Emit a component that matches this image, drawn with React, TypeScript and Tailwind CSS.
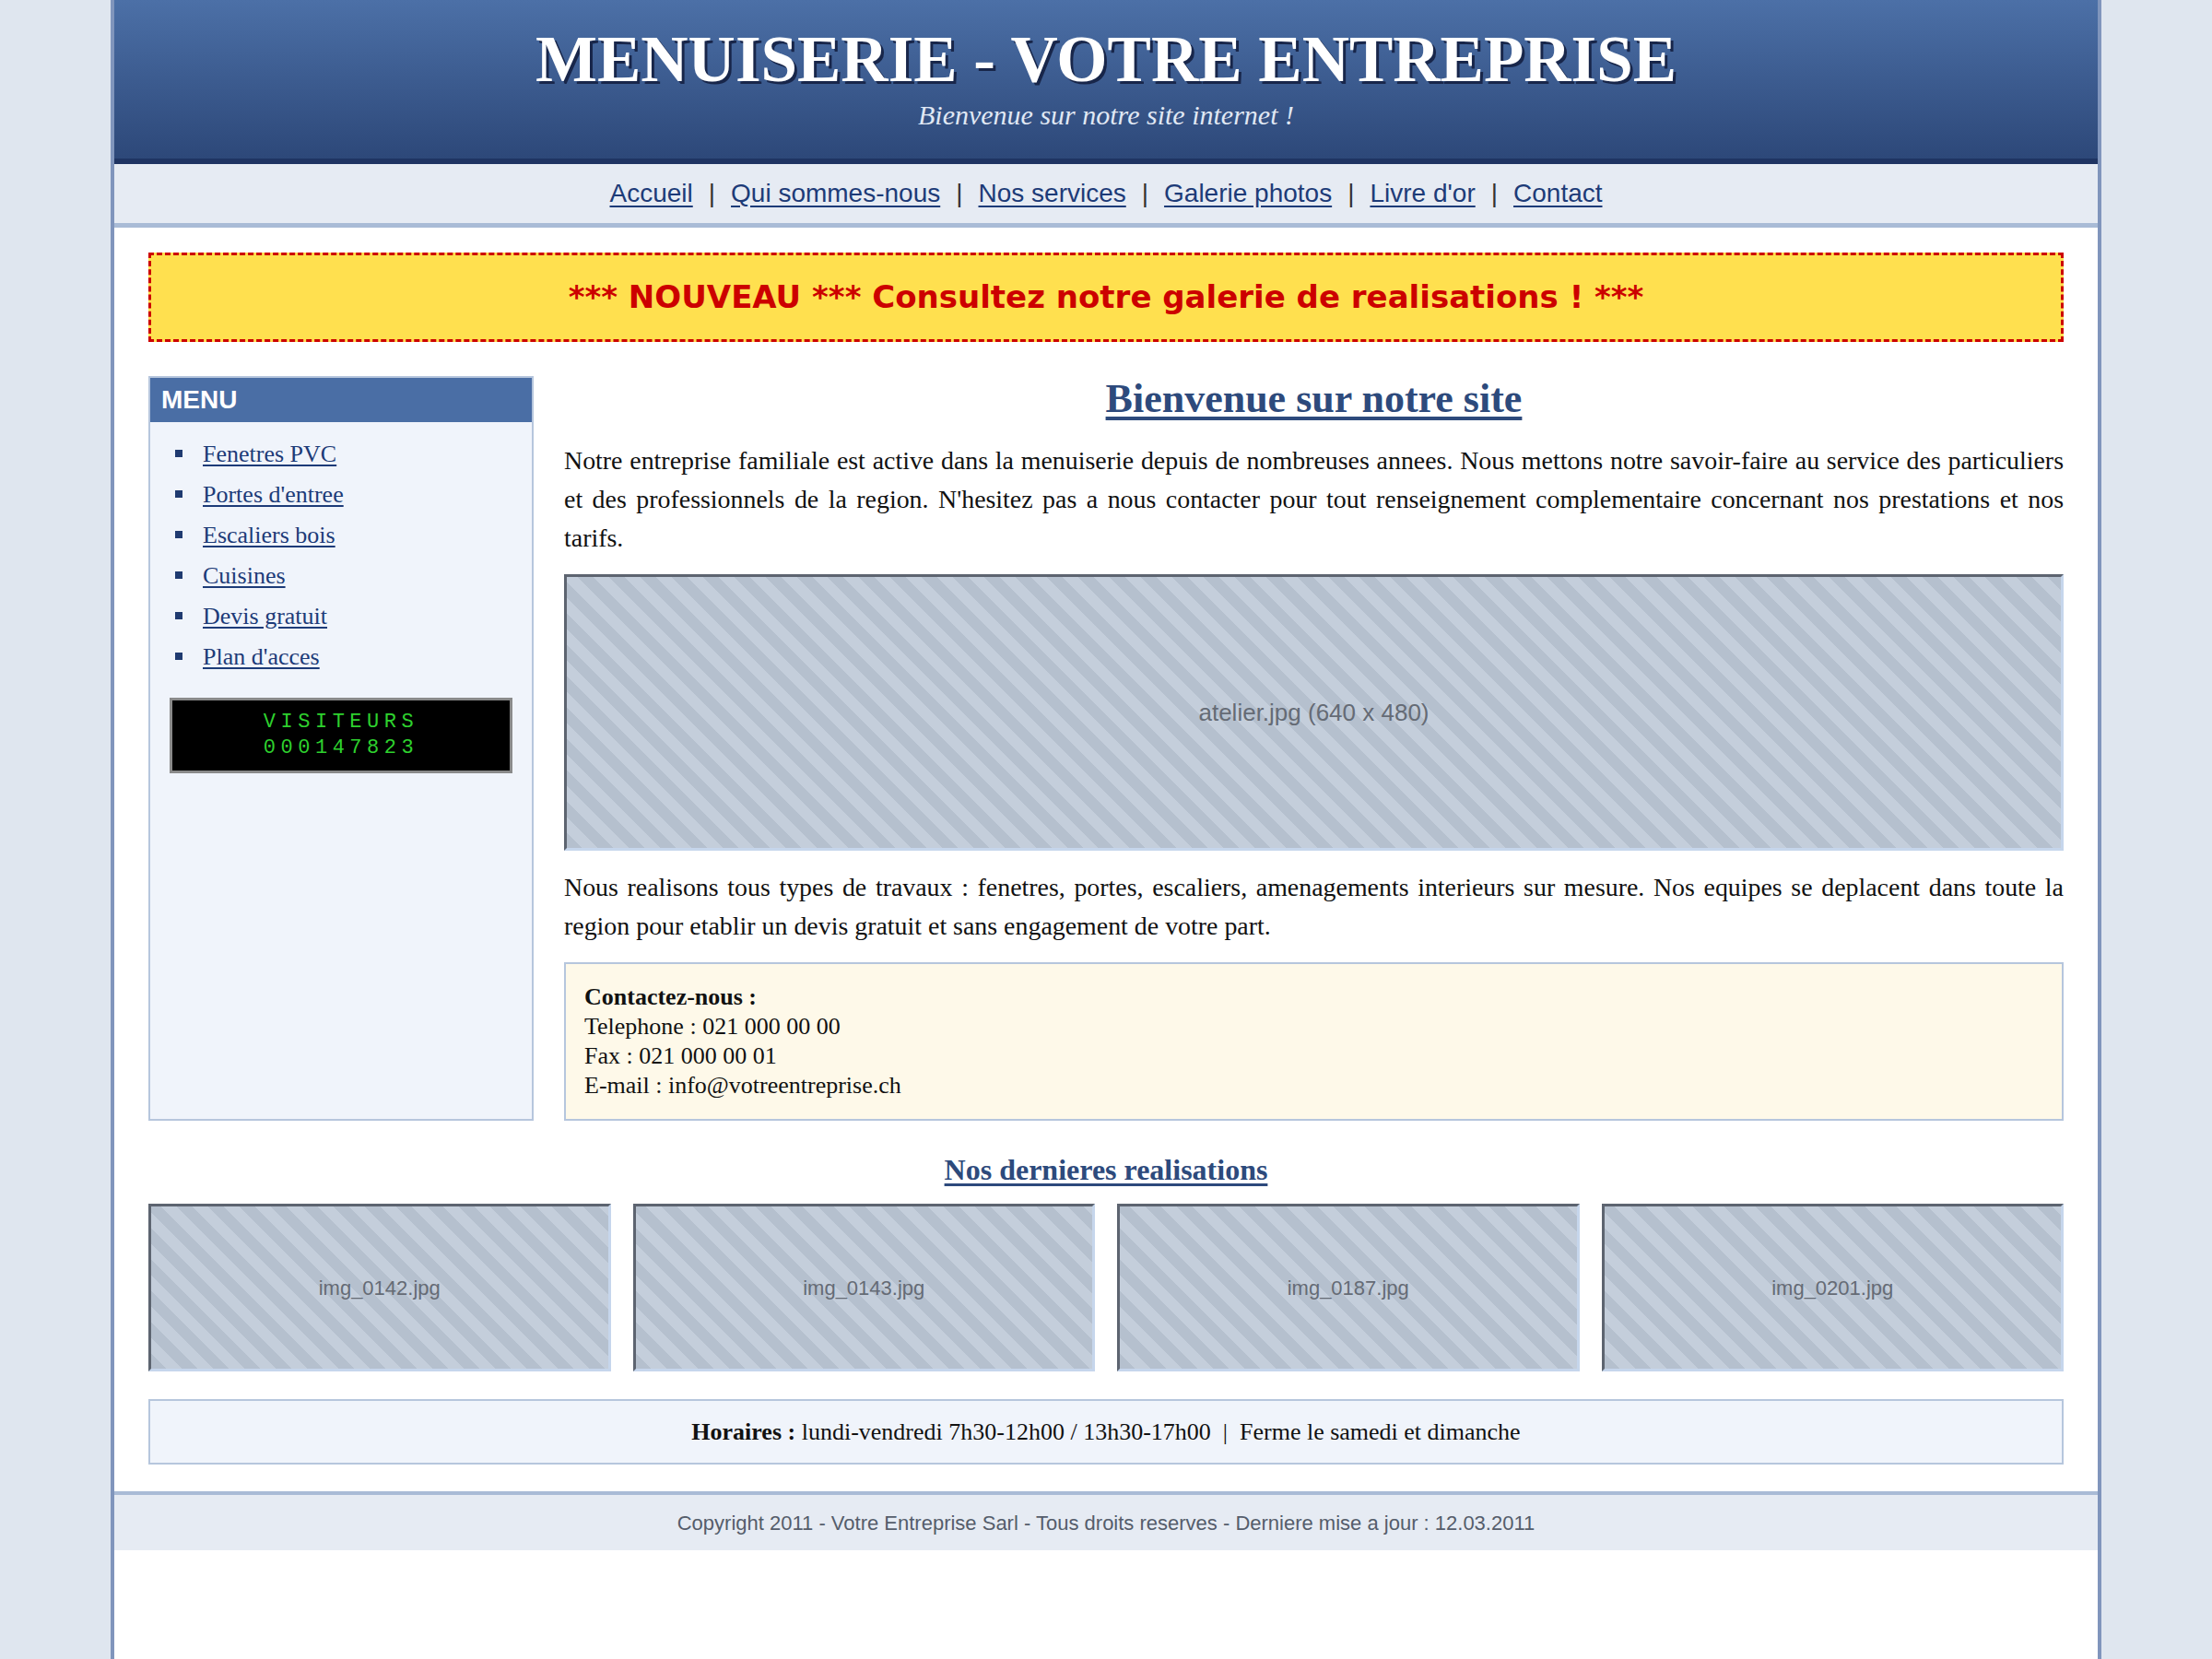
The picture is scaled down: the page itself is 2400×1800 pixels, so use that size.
const navLinks = ['Accueil', 'Qui sommes-nous', 'Nos services', 'Galerie photos', "Livre d'or", 'Contact'];
const menuItems = ['Fenetres PVC', "Portes d'entree", 'Escaliers bois', 'Cuisines', 'Devis gratuit', "Plan d'acces"];
const thumbs = ['img_0142.jpg', 'img_0143.jpg', 'img_0187.jpg', 'img_0201.jpg'];

function Placeholder({ label, className, textClass }: { label: string; className: string; textClass: string }) {
  return (
    <div
      className={`flex items-center justify-center border-[3px] border-t-[#5d6470] border-l-[#5d6470] border-r-[#c6d6ec] border-b-[#c6d6ec] bg-[repeating-linear-gradient(45deg,#b5c0ce_0px,#b5c0ce_12px,#c4cedb_12px,#c4cedb_24px)] font-['Liberation_Sans',sans-serif] text-[#656b75] ${className}`}
    >
      <span className={textClass}>{label}</span>
    </div>
  );
}

export default function App() {
  return (
    <div className="min-h-screen bg-[#dfe6ef] font-['Liberation_Serif',serif] text-[#111]">
      <div className="mx-auto min-h-screen w-[2160px] border-x-4 border-[#8095bc] bg-white">
        {/* Header banner */}
        <header className="h-[178px] border-b-[6px] border-[#1f3462] bg-linear-to-b from-[#4c70a7] to-[#2d4879] pt-[22px] text-center">
          <h1 className="text-[71px] font-bold leading-[84px] text-white [text-shadow:3px_3px_0_#18264a]">
            MENUISERIE - VOTRE ENTREPRISE
          </h1>
          <p className="mt-[3px] text-[30px] italic leading-[32px] text-[#e0e8f4]">Bienvenue sur notre site internet !</p>
        </header>

        {/* Top navigation */}
        <nav className="flex h-[69px] items-center justify-center gap-[17px] border-b-[5px] border-[#a9bbd6] bg-[#e6ebf3] font-['Liberation_Sans',sans-serif] text-[28px]">
          {navLinks.map((l, i) => (
            <div key={l} className="flex items-center gap-[17px]">
              {i > 0 && <span className="text-[#333]">|</span>}
              <a href="#" className="text-[#1d3b78] underline underline-offset-[4px]">
                {l}
              </a>
            </div>
          ))}
        </nav>

        <main className="px-[37px] pt-[27px] pb-[29px]">
          {/* Announcement */}
          <div className="flex h-[97px] items-center justify-center border-[3px] border-dashed border-[#cc0000] bg-[#ffe04f] font-['Comic_Sans_MS','DejaVu_Sans',sans-serif] text-[34px] font-bold text-[#cc0000]">
            *** NOUVEAU *** Consultez notre galerie de realisations ! ***
          </div>

          <div className="mt-[37px] flex items-stretch gap-[33px]">
            {/* Sidebar */}
            <aside className="w-[418px] shrink-0 border-2 border-[#b6c6dd] bg-[#f0f4fb]">
              <div className="flex h-[48px] items-center bg-[#4a6ea5] pl-[12px] font-['Liberation_Sans',sans-serif] text-[28px] font-bold text-white">
                MENU
              </div>
              <ul className="pt-[12px]">
                {menuItems.map((m) => (
                  <li key={m} className="flex h-[44px] items-center">
                    <span className="ml-[27px] h-[8px] w-[8px] bg-[#1f3a70]" />
                    <a href="#" className="ml-[22px] text-[26px] text-[#1d3b78] underline underline-offset-[3px]">
                      {m}
                    </a>
                  </li>
                ))}
              </ul>
              <div className="mx-[21px] mt-[23px] flex h-[82px] flex-col items-center justify-center border-[3px] border-[#8a8a8a] bg-black font-['Liberation_Mono',monospace] text-[22px] leading-[28px] tracking-[5.5px] text-[#2ed12e]">
                <span>VISITEURS</span>
                <span>000147823</span>
              </div>
            </aside>

            {/* Main content */}
            <section className="flex min-w-0 flex-1 flex-col">
              <h2 className="text-center text-[44px] font-bold leading-[50px] text-[#2d4a7c] underline underline-offset-[5px]">
                Bienvenue sur notre site
              </h2>
              <p className="mt-[21px] text-justify text-[27.9px] leading-[42px]">
                Notre entreprise familiale est active dans la menuiserie depuis de nombreuses annees. Nous mettons notre
                savoir-faire au service des particuliers et des professionnels de la region. N'hesitez pas a nous
                contacter pour tout renseignement complementaire concernant nos prestations et nos tarifs.
              </p>
              <Placeholder label="atelier.jpg (640 x 480)" className="mt-[18px] h-[300px]" textClass="text-[26px]" />
              <p className="mt-[19px] text-justify text-[27.9px] leading-[42px]">
                Nous realisons tous types de travaux : fenetres, portes, escaliers, amenagements interieurs sur mesure.
                Nos equipes se deplacent dans toute la region pour etablir un devis gratuit et sans engagement de votre
                part.
              </p>
              <div className="mt-[18px] border-2 border-[#b6c6dd] bg-[#fef9e9] px-[20px] py-[20px] text-[26px] leading-[32px]">
                <div className="font-bold">Contactez-nous :</div>
                <div>Telephone : 021 000 00 00</div>
                <div>Fax : 021 000 00 01</div>
                <div>E-mail : info@votreentreprise.ch</div>
              </div>
            </section>
          </div>

          <h3 className="mt-[35px] text-center text-[32px] font-bold leading-[37px] text-[#2d4a7c] underline underline-offset-[4px]">
            Nos dernieres realisations
          </h3>
          <div className="mt-[18px] grid grid-cols-4 gap-[24px]">
            {thumbs.map((t) => (
              <Placeholder key={t} label={t} className="h-[182px]" textClass="text-[22px]" />
            ))}
          </div>

          <div className="mt-[30px] flex h-[71px] items-center justify-center border-2 border-[#b6c6dd] bg-[#f0f4fb] text-[26px]">
            <span className="font-bold">Horaires :</span>
            <span className="whitespace-pre"> lundi-vendredi 7h30-12h00 / 13h30-17h00  |  Ferme le samedi et dimanche</span>
          </div>
        </main>

        <footer className="flex h-[64px] items-center justify-center border-t-4 border-[#a9bbd6] bg-[#e6ebf3] font-['Liberation_Sans',sans-serif] text-[22px] text-[#555d6b]">
          Copyright 2011 - Votre Entreprise Sarl - Tous droits reserves - Derniere mise a jour : 12.03.2011
        </footer>
      </div>
    </div>
  );
}
